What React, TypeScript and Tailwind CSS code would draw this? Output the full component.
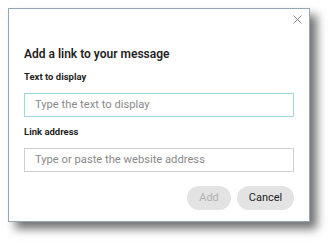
import React from "react";

export default function App() {
  return (
    <div className="w-[332px] h-[245px] bg-white overflow-hidden" style={{ fontFamily: 'Roboto, "Noto Sans", sans-serif' }}>
      <div className="relative ml-[8px] mt-[8px] w-[302px] h-[214px] bg-white border border-[#93a7b5] shadow-[7px_7px_9px_rgba(0,0,0,0.55)] px-[15px] flex flex-col">
        <button className="absolute left-[284px] top-[6px] w-[9px] h-[9px]">
          <svg viewBox="0 0 9 9" width="9" height="9">
            <path d="M0.5 0.5 L8.5 8.5 M8.5 0.5 L0.5 8.5" stroke="#7a7a7a" strokeWidth="0.9" fill="none" />
          </svg>
        </button>
        <div className="mt-[36px] text-[12px] leading-[18px] font-semibold text-[#1f1f1f]">Add a link to your message</div>
        <div className="mt-[7px] text-[9.5px] leading-[14px] font-bold text-[#1f1f1f]">Text to display</div>
        <div className="mt-[9px] h-[24px] w-[270px] border border-[#9fd8dc] flex items-center pl-[10px] text-[11.2px] text-[#8a8a8a]">Type the text to display</div>
        <div className="mt-[8px] text-[9.5px] leading-[14px] font-bold text-[#1f1f1f]">Link address</div>
        <div className="mt-[9px] h-[24px] w-[270px] border border-[#cfcfcf] flex items-center pl-[10px] text-[11.2px] text-[#8a8a8a]">Type or paste the website address</div>
        <div className="mt-[14px] flex justify-end gap-[6px] w-[270px]">
          <div className="h-[24px] w-[44px] rounded-full bg-[#e3e3e3] flex items-center justify-center text-[11px] text-[#b0b0b0]">Add</div>
          <div className="h-[24px] w-[57px] rounded-full bg-[#e3e3e3] flex items-center justify-center text-[11px] text-[#1f1f1f]">Cancel</div>
        </div>
      </div>
    </div>
  );
}
